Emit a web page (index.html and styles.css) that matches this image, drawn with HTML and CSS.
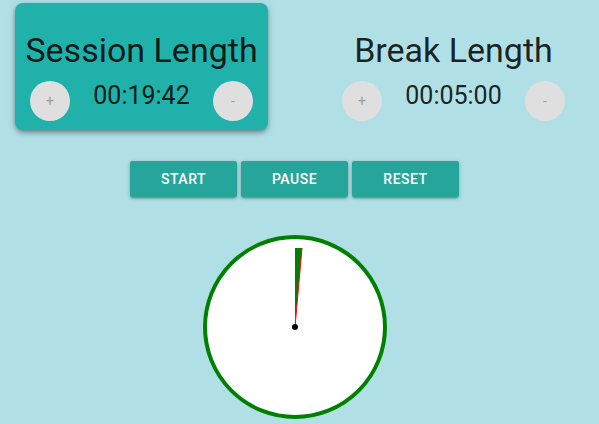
FILE: index.html
```html
<!DOCTYPE html>
<html>
<head>
<meta charset="utf-8">
<link rel="stylesheet" href="styles.css">
</head>
<body>
<div class="top">
  <div class="panel card">
    <h4 class="title">Session Length</h4>
    <div class="ctrl">
      <span class="fab">+</span>
      <span class="time">00:19:42</span>
      <span class="fab">-</span>
    </div>
  </div>
  <div class="panel">
    <h4 class="title">Break Length</h4>
    <div class="ctrl">
      <span class="fab">+</span>
      <span class="time">00:05:00</span>
      <span class="fab">-</span>
    </div>
  </div>
</div>
<div class="actions">
  <button class="btn">Start</button>
  <button class="btn">Pause</button>
  <button class="btn">Reset</button>
</div>
<div class="clockwrap">
  <svg class="clock" width="184" height="184" viewBox="0 0 184 184">
    <circle cx="92" cy="92" r="90" fill="#fff" stroke="#008000" stroke-width="4"/>
    <polygon points="92,92 92,13 99,13" fill="#008000"/>
    <line x1="92" y1="92" x2="99" y2="13" stroke="#ff0000" stroke-width="1"/>
    <circle cx="92" cy="92" r="3" fill="#000"/>
  </svg>
</div>
</body>
</html>
```
FILE: styles.css
```css
html, body {
  margin: 0;
  padding: 0;
  background: #b0e0e6;
  font-family: Roboto, "Noto Sans", sans-serif;
  height: 424px;
  overflow: hidden;
}
.top {
  display: flex;
  gap: 59px;
  padding: 3px 0 0 15px;
}
.panel {
  width: 253px;
  box-sizing: border-box;
  padding: 27px 15px 9px;
}
.card {
  background: #20b2aa;
  border-radius: 8px;
  box-shadow: 0 4px 5px 0 rgba(0,0,0,.14), 0 1px 10px 0 rgba(0,0,0,.12), 0 2px 4px -1px rgba(0,0,0,.3);
}
.title {
  margin: 0 -20px;
  font-size: 34px;
  font-weight: 400;
  line-height: 40px;
  text-align: center;
  color: rgba(0,0,0,0.87);
  white-space: nowrap;
}
.ctrl {
  margin-top: 11px;
  display: flex;
  justify-content: space-between;
  align-items: flex-start;
  height: 40px;
}
.fab {
  width: 40px;
  height: 40px;
  border-radius: 50%;
  background: #dfdfdf;
  color: #9f9f9f;
  font-size: 14px;
  line-height: 40px;
  text-align: center;
}
.time {
  font-size: 25px;
  line-height: 24px;
  margin-top: 3px;
  color: rgba(0,0,0,0.87);
}
.actions {
  display: flex;
  justify-content: center;
  gap: 4px;
  margin-top: 31px;
  padding-right: 10px;
}
.btn {
  width: 107px;
  height: 36px;
  border: none;
  border-radius: 2px;
  background: #26a69a;
  color: #fff;
  font-family: Roboto, sans-serif;
  font-size: 14px;
  font-weight: 500;
  letter-spacing: .5px;
  text-transform: uppercase;
  padding: 0;
  box-shadow: 0 2px 2px 0 rgba(0,0,0,.14), 0 3px 1px -2px rgba(0,0,0,.12), 0 1px 5px 0 rgba(0,0,0,.2);
}
.clockwrap {
  display: flex;
  justify-content: center;
  margin-top: 38px;
  padding-right: 9px;
}
.clock {
  display: block;
}
```
